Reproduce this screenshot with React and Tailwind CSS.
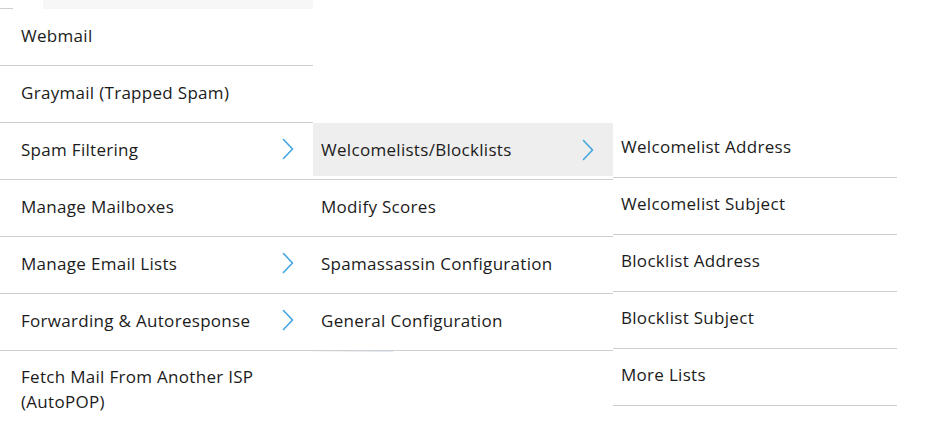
import React from "react";

const Chevron = () => (
  <svg width="12" height="22" viewBox="0 0 12 22" fill="none" className="shrink-0">
    <path d="M1.5 1.5 L10.5 11 L1.5 20.5" stroke="#42a5e0" strokeWidth="1.6" strokeLinecap="round" strokeLinejoin="round" />
  </svg>
);

const Item = ({ label, arrow }) => (
  <div className="border-b border-[#cfcfcf]">
    <div className="flex items-center justify-between pl-2 pr-[19px] h-[56px] pb-[4px]">
      <span className="leading-[25px]">{label}</span>
      {arrow && <Chevron />}
    </div>
  </div>
);

export default function App() {
  const col1 = [
    { label: "Webmail" },
    { label: "Graymail (Trapped Spam)" },
    { label: "Spam Filtering", arrow: true },
    { label: "Manage Mailboxes" },
    { label: "Manage Email Lists", arrow: true },
    { label: "Forwarding & Autoresponse", arrow: true },
  ];
  const col2 = [
    { label: "Modify Scores" },
    { label: "Spamassassin Configuration" },
    { label: "General Configuration" },
  ];
  const col3 = [
    "Welcomelist Address",
    "Welcomelist Subject",
    "Blocklist Address",
    "Blocklist Subject",
    "More Lists",
  ];
  return (
    <div
      className="w-[946px] h-[424px] overflow-hidden bg-white text-[17px] tracking-[0.3px] text-[#1b1b1b]"
      style={{ fontFamily: '"Open Sans", "Liberation Sans", sans-serif' }}
    >
      <div className="flex items-start">
        {/* left strip */}
        <div className="w-[13px] shrink-0 flex flex-col">
          <div className="h-[9px] border-b border-[#cfcfcf]" />
          {[0, 1, 2, 3, 4, 5].map((i) => (
            <div key={i} className="h-[57px] border-b border-[#cfcfcf]" />
          ))}
        </div>
        {/* column 1 */}
        <div className="w-[300px] shrink-0 flex flex-col">
          <div className="h-[9px] flex">
            <div className="w-[30px]" />
            <div className="flex-1 bg-[#f7f7f7]" />
          </div>
          {col1.map((it) => (
            <Item key={it.label} {...it} />
          ))}
          <div className="pl-2 pt-[13px] leading-[25px]">
            Fetch Mail From Another ISP
            <br />
            (AutoPOP)
          </div>
        </div>
        {/* column 2 */}
        <div className="w-[300px] shrink-0 mt-[123px] flex flex-col">
          <div className="border-b border-[#cfcfcf] pb-[3px]">
            <div className="flex items-center justify-between pl-2 pr-[19px] h-[53px] bg-[#eeeeee]">
              <span>Welcomelists/Blocklists</span>
              <Chevron />
            </div>
          </div>
          {col2.map((it) => (
            <Item key={it.label} {...it} />
          ))}
          <div className="h-px w-[80px] bg-gradient-to-r from-[#f7f9fb] to-[#dfe6ee]" />
        </div>
        {/* column 3 */}
        <div className="w-[284px] shrink-0 mt-[121px] flex flex-col">
          {col3.map((t) => (
            <div key={t} className="border-b border-[#cfcfcf]">
              <div className="flex items-center pl-2 h-[56px] pb-[4px]">
                <span>{t}</span>
              </div>
            </div>
          ))}
        </div>
      </div>
    </div>
  );
}
